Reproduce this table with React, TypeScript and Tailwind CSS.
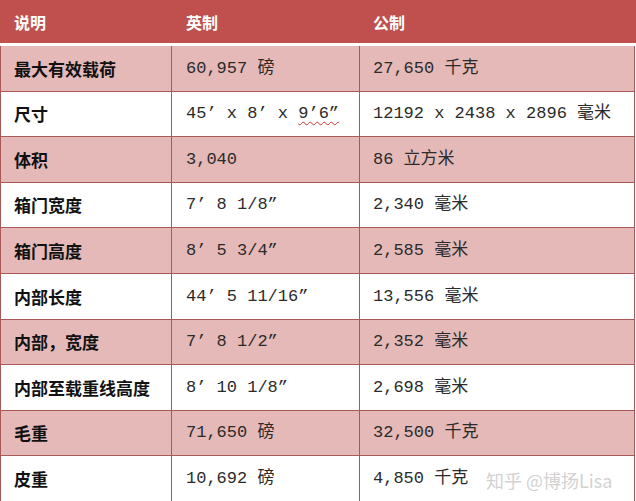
import React from "react";

const rows: { label: string; imperial: React.ReactNode; metric: string }[] = [
  { label: "最大有效载荷", imperial: "60,957 磅", metric: "27,650 千克" },
  {
    label: "尺寸",
    imperial: (
      <>
        45’ x 8’ x{" "}
        <span className="underline decoration-wavy decoration-[#d03030] decoration-1 underline-offset-[3px]">9’6”</span>
      </>
    ),
    metric: "12192 x 2438 x 2896 毫米",
  },
  { label: "体积", imperial: "3,040", metric: "86 立方米" },
  { label: "箱门宽度", imperial: "7’ 8 1/8”", metric: "2,340 毫米" },
  { label: "箱门高度", imperial: "8’ 5 3/4”", metric: "2,585 毫米" },
  { label: "内部长度", imperial: "44’ 5 11/16”", metric: "13,556 毫米" },
  { label: "内部，宽度", imperial: "7’ 8 1/2”", metric: "2,352 毫米" },
  { label: "内部至载重线高度", imperial: "8’ 10 1/8”", metric: "2,698 毫米" },
  { label: "毛重", imperial: "71,650 磅", metric: "32,500 千克" },
  { label: "皮重", imperial: "10,692 磅", metric: "4,850 千克" },
];

const cjk = { fontFamily: '"Noto Sans CJK SC", sans-serif' };
const mono = { fontFamily: '"Liberation Mono", "Noto Sans CJK SC", monospace' };

export default function App() {
  return (
    <div className="relative w-[636px] h-[501px] overflow-hidden bg-white">
      <div
        className="flex h-[43px] items-center bg-[#c0504d] text-white font-bold text-[16px]"
        style={cjk}
      >
        <div className="w-[171px] pl-[14px]">说明</div>
        <div className="w-[188px] pl-[15px]">英制</div>
        <div className="flex-1 pl-[14px]">公制</div>
      </div>
      <div className="h-[3px] bg-white" />
      <div className="w-[635px] border-l border-r border-[#a85856]">
        {rows.map((r, i) => (
          <div
            key={r.label}
            className={`flex h-[45.6px] border-b border-[#a85856] ${
              i % 2 === 0 ? "bg-[#e5b9b8]" : "bg-white"
            }`}
          >
            <div
              className="w-[171px] shrink-0 flex items-center pl-[13px] border-r border-[#a85856] font-bold text-[17px] text-[#111]"
              style={cjk}
            >
              {r.label}
            </div>
            <div
              className="w-[188px] shrink-0 flex items-center pl-[14px] border-r border-[#a85856] text-[17px] text-[#2b2b2b] whitespace-pre"
              style={mono}
            >
              {r.imperial}
            </div>
            <div
              className="flex-1 flex items-center pl-[13px] text-[17px] text-[#2b2b2b] whitespace-pre"
              style={mono}
            >
              {r.metric}
            </div>
          </div>
        ))}
      </div>
      <div
        className="absolute left-[486px] top-[467px] text-[18px] text-[#d2d2d2] whitespace-nowrap"
        style={{ fontFamily: '"Noto Sans CJK SC", "Liberation Sans", sans-serif' }}
      >
        知乎 @博扬Lisa
      </div>
    </div>
  );
}
